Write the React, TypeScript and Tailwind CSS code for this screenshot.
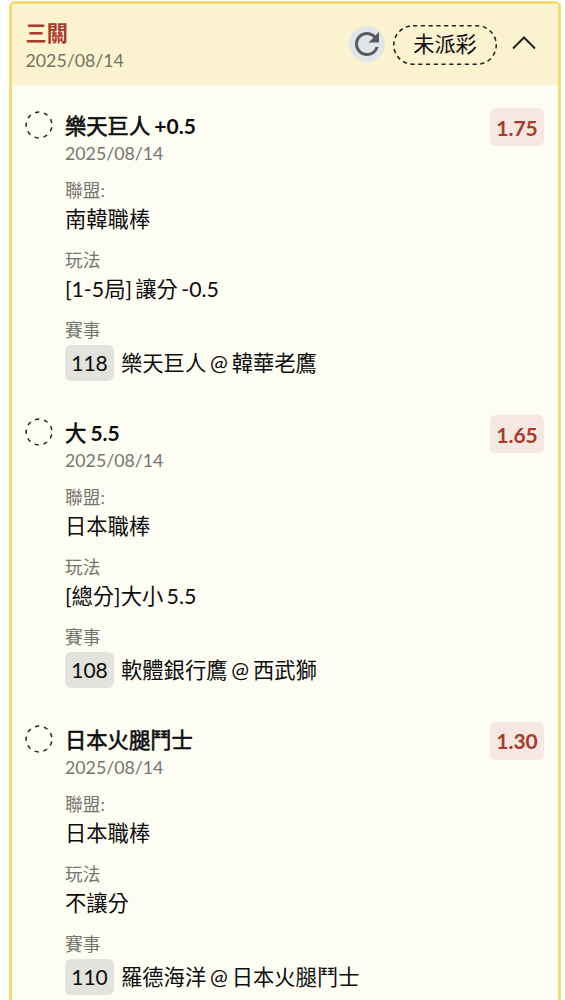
import { MdRefresh } from 'react-icons/md';

type Bet = {
  name: string;
  line?: string;
  odds: string;
  league: string;
  play: string;
  gameNo: string;
  game: string;
};

const bets: Bet[] = [
  { name: '樂天巨人', line: '+0.5', odds: '1.75', league: '南韓職棒', play: '[1-5局] 讓分 -0.5', gameNo: '118', game: '樂天巨人 @ 韓華老鷹' },
  { name: '大', line: '5.5', odds: '1.65', league: '日本職棒', play: '[總分]大小 5.5', gameNo: '108', game: '軟體銀行鷹 @ 西武獅' },
  { name: '日本火腿鬥士', odds: '1.30', league: '日本職棒', play: '不讓分', gameNo: '110', game: '羅德海洋 @ 日本火腿鬥士' },
];

function DashedCircle() {
  return (
    <svg className="mt-[3px] h-[28px] w-[28px] shrink-0" viewBox="0 0 28 28" fill="none">
      <circle cx="14" cy="14" r="12.9" stroke="#222" strokeWidth="1.5" strokeDasharray="4.2 4.806" strokeDashoffset="-2.4" />
    </svg>
  );
}

function Label({ children }: { children: string }) {
  return <div className="h-[26px] pt-px text-[17.7px] leading-[26px] text-[#757570]">{children}</div>;
}

function Value({ children }: { children: string }) {
  return <div className="mb-3 h-8 text-[21.3px] leading-8 text-[#0c0c0c] [word-spacing:-2.1px]">{children}</div>;
}

function BetRow({ bet }: { bet: Bet }) {
  return (
    <div className="flex items-start">
      <DashedCircle />
      <div className="ml-[12px] flex-1 whitespace-nowrap">
        <div className="mt-1 h-7 text-[21.3px] leading-7 text-[#0c0c0c] [word-spacing:-1px]">
          <span className="[-webkit-text-stroke:0.6px_#0c0c0c]">{bet.name}</span>
          {bet.line && <span className="text-[21px] font-bold"> {bet.line}</span>}
        </div>
        <div className="mb-[11px] h-[26px] text-[17.75px] leading-[26px] text-[#757570]">2025/08/14</div>
        <Label>聯盟:</Label>
        <Value>{bet.league}</Value>
        <Label>玩法</Label>
        <Value>{bet.play}</Value>
        <Label>賽事</Label>
        <div className="mt-[2px] flex h-9 items-center text-[21.3px] leading-9 text-[#0c0c0c] [word-spacing:-1.6px]">
          <span className="mr-[7px] flex h-9 w-[49px] items-center justify-center rounded-[6px] bg-[#e3e2dc] text-[21px]">{bet.gameNo}</span>
          {bet.game}
        </div>
      </div>
      <div className="flex h-[38px] w-[54px] items-center justify-center rounded-[6px] bg-[#f5e7e1] pt-px text-[21px] font-bold text-[#a93a2c]">
        {bet.odds}
      </div>
    </div>
  );
}

export default function App() {
  return (
    <div className="h-[1000px] overflow-hidden bg-white pl-[9px] pr-1 pt-px font-['Lato','Noto_Sans_CJK_TC',sans-serif]">
      <div className="h-[1100px] overflow-hidden rounded-[6px] border-[3px] border-[#efdc73] bg-[#fefdf4]">
        <div className="flex h-[81px] bg-[#fbf2cf] pl-[13.5px] pr-[22px]">
          <div className="flex-1 pt-[15px]">
            <div className="h-7 text-[21.2px] font-bold leading-7 text-[#a93a2c]">三關</div>
            <div className="h-[26px] text-[17.75px] leading-[26px] text-[#757265]">2025/08/14</div>
          </div>
          <div className="flex h-[80px] items-center">
            <span className="flex h-9 w-9 items-center justify-center rounded-full bg-[#e2e4e6]">
              <MdRefresh className="h-[36px] w-[36px] shrink-0 text-[#555b60]" />
            </span>
            <div className="relative ml-2 flex h-10 w-[104px] items-center justify-center pt-[2px] text-[21.2px] text-[#0c0c0c]">
              <svg className="absolute inset-x-0 top-[0.5px] h-10 w-[104px]" viewBox="0 0 104 40" fill="none">
                <rect x="0.75" y="0.75" width="102.5" height="38.5" rx="19.25" stroke="#222" strokeWidth="1.5" strokeDasharray="4.2 3.57" />
              </svg>
              未派彩
            </div>
            <svg className="mb-[2px] ml-[15px] h-[14px] w-6" viewBox="0 0 24 14" fill="none">
              <path d="M1 12.5 12 1.5 23 12.5" stroke="#222" strokeWidth="2" />
            </svg>
          </div>
        </div>
        <div className="flex flex-col gap-[33.8px] pl-[13px] pr-[14px] pt-[23px]">
          {bets.map((bet) => (
            <BetRow key={bet.gameNo} bet={bet} />
          ))}
        </div>
      </div>
    </div>
  );
}
